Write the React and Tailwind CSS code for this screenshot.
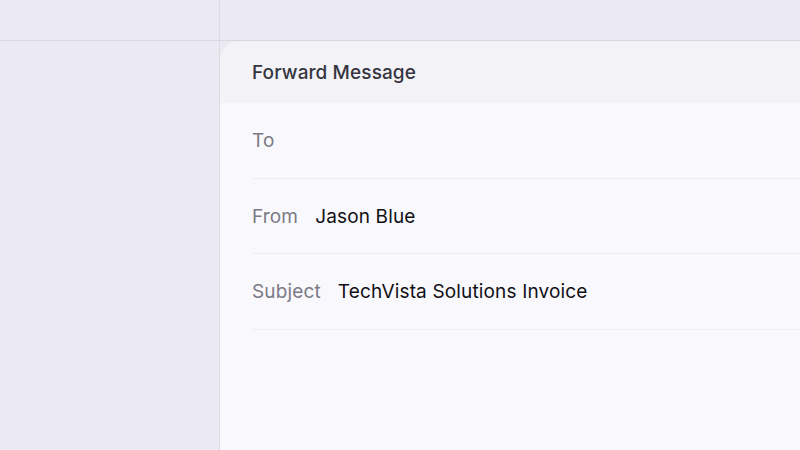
import React from 'react'

const rows = [
    { label: 'To', value: '' },
    { label: 'From', value: 'Jason Blue' },
    { label: 'Subject', value: 'TechVista Solutions Invoice' },
]

const App = () => {
    return (
        <div className="flex h-[450px] w-[800px] overflow-hidden bg-[#ebe9f2] text-[19px]" style={{ fontFamily: 'Inter, "Noto Sans", sans-serif' }}>
            {/* Sidebar */}
            <div className="flex w-[220px] shrink-0 flex-col border-r border-[#dcdae3]">
                <div className="h-[41px] border-b border-[#d8d6df]" />
                <div className="flex-1 bg-[#ebe9f1]" />
            </div>

            {/* Main */}
            <div className="flex flex-1 flex-col">
                <div className="h-[41px] shrink-0 border-b border-[#d8d6df]" />
                <div className="flex flex-1 flex-col overflow-hidden rounded-tl-[20px] bg-[#f9f8fc]">
                    <div className="flex h-[62px] shrink-0 items-center bg-[#f2f2f7] pl-[32px] pt-[3px]">
                        <h2 className="font-medium tracking-[0.1px] text-[#36353f]">Forward Message</h2>
                    </div>
                    <div className="flex flex-col pl-[32px]">
                        {rows.map((row) => (
                            <div key={row.label} className="flex h-[75.5px] items-center gap-[17px] border-b border-[#efedf3] pt-[2px] tracking-[0.15px]">
                                <span className="text-[#7b7a84]">{row.label}</span>
                                {row.value && <span className="text-[#111015]">{row.value}</span>}
                            </div>
                        ))}
                    </div>
                </div>
            </div>
        </div>
    )
}

export default App
